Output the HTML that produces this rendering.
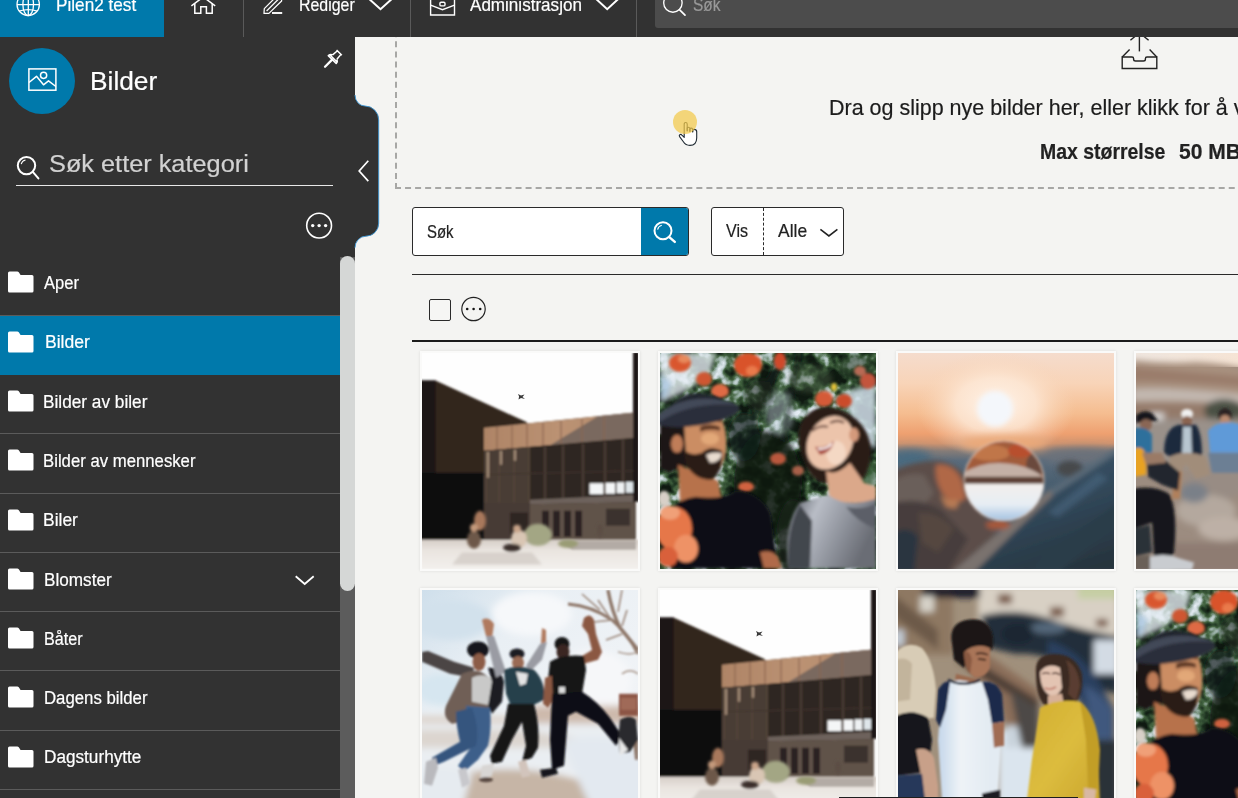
<!DOCTYPE html>
<html lang="no">
<head>
<meta charset="utf-8">
<title>Bilder</title>
<style>
*{box-sizing:border-box;margin:0;padding:0}
html,body{width:1238px;height:798px;overflow:hidden;background:#f4f4f2;font-family:"Liberation Sans",sans-serif;}
#app{position:relative;width:1238px;height:798px;overflow:hidden;background:#f4f4f2}
.abs{position:absolute}
.t{position:absolute;white-space:nowrap;transform-origin:0 0;line-height:1;display:block;-webkit-text-stroke:0.2px currentColor}
/* top bar */
#topbar{position:absolute;left:0;top:0;width:1238px;height:37px;background:#323232}
#sitetab{position:absolute;left:0;top:0;width:164px;height:37px;background:#0079ab}
.vsep{position:absolute;top:0;width:1px;height:37px;background:#5a5a5a}
#topsearch{position:absolute;left:655px;top:-6px;width:600px;height:33.5px;background:#4c4c4c;border-radius:3px}
/* sidebar */
#sidebar{position:absolute;left:0;top:37px;width:355px;height:761px;background:#323232}
.row{position:absolute;left:0;width:340px;border-bottom:1px solid #5b5b5b}
.row.sel{background:#0079ab;border-bottom-color:#0079ab}
.row svg{position:absolute;left:8px}
#sbtrack{position:absolute;left:340px;top:257px;width:15px;height:541px;background:#5c5c5c}
#sbthumb{position:absolute;left:340px;top:256px;width:15px;height:335px;background:#d5d7d6;border-radius:8px}
/* main */
#drop{position:absolute;left:395px;top:21px;width:900px;height:168px;border:2px dashed #a7a7a5}
#searchbox{position:absolute;left:412px;top:207px;width:277px;height:49px;background:#fff;border:1px solid #2a2a2a;border-radius:3px;overflow:hidden}
#searchbtn{position:absolute;left:228px;top:0;width:48px;height:47px;background:#0079ab}
#visbox{position:absolute;left:711px;top:207px;width:133px;height:49px;background:#fff;border:1px solid #2a2a2a;border-radius:3px}
#visdiv{position:absolute;left:51px;top:0;height:47px;width:0;border-left:1px dashed #2a2a2a}
.hr1{position:absolute;left:412px;top:274px;width:830px;height:1px;background:#2a2a2a}
.hr2{position:absolute;left:412px;top:340px;width:830px;height:2px;background:#1c1c1c}
#chk{position:absolute;left:429px;top:299px;width:22px;height:22px;border:1px solid #2a2a2a;border-radius:2px;background:#f6f6f4}
.card{position:absolute;width:220.5px;height:219.5px;background:#fafaf9;box-shadow:0 0 3px rgba(0,0,0,.10)}
.card svg{position:absolute;left:2.5px;top:2px;width:216px;height:215.6px;display:block}
</style>
</head>
<body>
<div id="app">

<!-- MAIN AREA -->
<div id="drop"></div>
<svg class="abs" style="left:1115px;top:30px" width="50" height="44" viewBox="0 0 50 44" fill="none" stroke="#222" stroke-width="1.4"><path d="M24.4 2 V21.4"/><path d="M15.4 10.2 L24.4 2.6 L33.6 10.2"/><path d="M7.2 27 L14.6 19.6 M41.8 27 L34.6 19.6"/><path d="M7.2 27 H17 Q18.6 27 18.6 28.4 V29.2 Q18.6 31 20.6 31 H28.4 Q30.4 31 30.4 29.2 V28.4 Q30.4 27 32 27 H41.8 V38.5 H7.2 Z" stroke-linejoin="miter"/></svg>

<svg class="abs" style="left:676px;top:119px" width="26" height="30" viewBox="0 0 26 30"><path d="M8.2 14.6 V5.2 Q8.2 3.5 9.7 3.5 Q11.2 3.5 11.2 5.2 V12 V9.2 Q11.2 8.2 12.4 8.2 Q13.6 8.2 13.9 9.4 V12.4 V10 Q14.2 9 15.3 9.1 Q16.5 9.2 16.7 10.4 V13 V11.2 Q17 10.3 18.2 10.4 Q20.6 10.6 20.7 12.6 V19 Q20.6 26.4 13.9 26.4 Q9.6 26.4 7.4 22.8 L3.6 17.6 Q2.8 16.4 3.8 15.7 Q4.9 15 5.9 16.1 L8.2 18.4 Z" fill="#fff" stroke="#1f2a33" stroke-width="1.1" stroke-linejoin="round"/><path d="M11.2 12 V8.6 M13.9 12.4 V9.6 M16.7 13 V10.6" stroke="#1f2a33" stroke-width="1" fill="none"/></svg>
<div class="abs" style="left:673px;top:110px;width:24px;height:24px;border-radius:50%;background:rgba(243,201,73,.72)"></div>

<div id="searchbox"><div id="searchbtn"></div></div>
<div id="visbox"><div id="visdiv"></div></div>
<div class="hr1"></div>
<div id="chk"></div>
<div class="hr2"></div>
<span class="t" style="left:828.60px;top:97.42px;font-size:21.6px;font-weight:400;color:#1c1c1c;transform:scaleX(0.9947)">Dra og slipp nye bilder her, eller klikk for å vi</span>
<span class="t" style="left:1039.80px;top:141.42px;font-size:21.6px;font-weight:700;color:#222;transform:scaleX(0.9006)">Max størrelse</span>
<span class="t" style="left:1179.20px;top:141.42px;font-size:21.6px;font-weight:700;color:#222;transform:scaleX(0.9747)">50 MB</span>
<span class="t" style="left:427.40px;top:224.03px;font-size:17.8px;font-weight:400;color:#222;transform:scaleX(0.8411)">Søk</span>
<span class="t" style="left:726.00px;top:223.13px;font-size:17.8px;font-weight:400;color:#222;transform:scaleX(0.9020)">Vis</span>
<span class="t" style="left:778.20px;top:223.13px;font-size:17.8px;font-weight:400;color:#222;transform:scaleX(0.9812)">Alle</span>
<svg class="abs" style="left:650px;top:217px" width="32" height="32" viewBox="0 0 32 32" fill="none" stroke="#fff"><circle cx="13" cy="13.8" r="8.5" stroke-width="2"/><path d="M7.6 12.6 A5.6 5.6 0 0 1 11.8 8.3" stroke-width="1.1"/><path d="M19.3 20.2 L24.8 24.9" stroke-width="2.4" stroke-linecap="round"/></svg>
<svg class="abs" style="left:816px;top:224px" width="26" height="18" viewBox="0 0 26 18" fill="none" stroke="#222" stroke-width="1.6"><path d="M4.4 5.4 L12.9 12 L21.4 5.4"/></svg>
<svg class="abs" style="left:459px;top:294px" width="30" height="30" viewBox="0 0 30 30"><circle cx="14.5" cy="15" r="11.7" fill="none" stroke="#222" stroke-width="1.2"/><circle cx="8.2" cy="15" r="1.3" fill="#111"/><circle cx="14.6" cy="15" r="1.3" fill="#111"/><circle cx="21.2" cy="15" r="1.3" fill="#111"/></svg>

<div class="card" style="left:419.5px;top:351px"><svg viewBox="0 0 216 216" preserveAspectRatio="none"><defs><filter id="b1a" x="-10%" y="-10%" width="120%" height="120%"><feGaussianBlur stdDeviation="0.9"/></filter><filter id="b1b" x="-20%" y="-20%" width="140%" height="140%"><feGaussianBlur stdDeviation="1.6"/></filter><linearGradient id="g1band" x1="0" x2="1"><stop offset="0" stop-color="#ae8466"/><stop offset="0.5" stop-color="#bb9273"/><stop offset="1" stop-color="#b48c6e"/></linearGradient><linearGradient id="g1gr" x1="0" y1="0" x2="0" y2="1"><stop offset="0" stop-color="#d6cec7"/><stop offset="0.35" stop-color="#e9e4df"/><stop offset="1" stop-color="#f3f0ed"/></linearGradient></defs>
<rect width="216" height="216" fill="#fefefe"/>
<g filter="url(#b1a)">
<!-- left dark building -->
<path d="M-2 27.5 H13.5 L105 69.5 V122 H-2 Z" fill="#33261f"/>
<path d="M-2 27.5 H13.5 V122 H-2 Z" fill="#1d1715"/>
<path d="M-2 120 H64 V188 H-2 Z" fill="#0e0c0c"/>
<!-- right building mass -->
<path d="M62 75 L213 59.5 V188 H62 Z" fill="#332a25"/>
<!-- tan band -->
<path d="M62 75 L213 59.5 V85 L62 98 Z" fill="url(#g1band)"/>
<path d="M128 92.3 L176 63.3 L213 59.5 V85 Z" fill="#7a695f"/><path d="M75 74 V97 M90 72.5 V95.5 M105 71 V94.5 M121 69.5 V93 M139 67.5 V91.5 M160 65.5 V89.5 M182 63 V88" stroke="#8a6450" stroke-width="1.1" fill="none"/>
<!-- glass facade columns -->
<path d="M62 98 L213 85 V146 H62 Z" fill="#2e2622"/><path d="M62 98 L108 94.5 V188 H62 Z" fill="#4a3e36"/>
<path d="M64 99 V186 M77 98 V186 M92 96.5 V186 M107 95 V150 M123 94 V150 M141 92.5 V146 M161 91 V146 M183 89 V146 M201 87 V146" stroke="#54453b" stroke-width="1.6" fill="none"/>
<path d="M62 122 L213 118" stroke="#40342e" stroke-width="1.2"/>
<path d="M66 99 V125 M79 98 V112 M93 97 V108" stroke="#a08974" stroke-width="2.4"/>
<!-- lower left facade (lit) -->
<path d="M62 150 H108 V188 H62 Z" fill="#473b34"/><path d="M88 160 H106 V186 H88 Z" fill="#2e2622"/>
<!-- white windows -->
<rect x="167.5" y="130.5" width="14" height="11" fill="#f4f6f7"/><rect x="183.5" y="130" width="9.5" height="11" fill="#f4f6f7"/><rect x="194.5" y="129.5" width="8" height="11" fill="#eef1f3"/><rect x="204" y="129" width="7" height="11" fill="#dfe6ea"/>
<!-- canopy -->
<path d="M108 147 L214 142 V149.5 L108 151.5 Z" fill="#6d625c"/>
<!-- lower right wall -->
<path d="M108 151.5 L214 149.5 V188 H108 Z" fill="#615349"/>
<path d="M120 158 H127 V184 H120 Z M131 158 H138 V184 H131 Z M142 158 H149 V184 H142 Z M153 158 H160 V184 H153 Z" fill="#2a2320"/>
<rect x="184" y="156" width="24" height="17" fill="#3a312d"/>
<!-- right edge bar -->
<rect x="211" y="-1" width="6" height="150" fill="#1a1513"/>
<!-- ground -->
<rect x="-1" y="187" width="218" height="30" fill="url(#g1gr)"/>
<path d="M138 188 H214 V197 H150 Z" fill="#b3aba5"/>
</g>
<g filter="url(#b1b)">
<!-- bush -->
<ellipse cx="116" cy="182" rx="14" ry="11" fill="#a3a684"/><ellipse cx="146" cy="191" rx="10" ry="4" fill="#9a9c74"/>
<!-- people -->
<ellipse cx="58" cy="168" rx="6" ry="10" fill="#a8785c"/><ellipse cx="52" cy="187" rx="7" ry="9" fill="#6d5848"/><ellipse cx="52" cy="175" rx="4" ry="4" fill="#c49a7c"/>
<ellipse cx="97" cy="186" rx="8" ry="9" fill="#d9c6b4"/><ellipse cx="95" cy="176" rx="4" ry="4" fill="#c9a489"/><ellipse cx="90" cy="195" rx="9" ry="4" fill="#3a2f2a"/>
<ellipse cx="178" cy="178" rx="3" ry="7" fill="#5c4d44"/>
<path d="M40 200 H110 L120 212 H30 Z" fill="#cfc8c2" opacity=".7"/>
</g>
<path d="M96 41 l3 1.5 l3.5 -1 l-2 2.5 l2.5 2 l-4 -0.8 l-2.5 1.5 l0.6 -3 z" fill="#3a3a3a"/>
</svg>
</div>
<div class="card" style="left:657.5px;top:351px"><svg viewBox="0 0 216 216" preserveAspectRatio="none"><defs><filter id="b2a" x="-20%" y="-20%" width="140%" height="140%"><feGaussianBlur stdDeviation="1.4"/></filter><filter id="b2b" x="-20%" y="-20%" width="140%" height="140%"><feGaussianBlur stdDeviation="2.6"/></filter><linearGradient id="g2sh" x1="0" x2="1" y1="0" y2="0.4"><stop offset="0" stop-color="#4b4f58"/><stop offset="0.35" stop-color="#b9bdc6"/><stop offset="0.7" stop-color="#8e929b"/><stop offset="1" stop-color="#6a6d75"/></linearGradient><filter id="f2t" x="0" y="0" width="100%" height="100%" color-interpolation-filters="sRGB"><feTurbulence type="fractalNoise" baseFrequency="0.06" numOctaves="3" seed="11"/><feColorMatrix type="matrix" values="2.2 0 0 0 -0.70  2.2 0 0 0 -0.70  2.2 0 0 0 -0.70  0 0 0 0 1"/><feComponentTransfer><feFuncR type="table" tableValues="0.06 0.13 0.27 0.66 0.90"/><feFuncG type="table" tableValues="0.10 0.22 0.40 0.74 0.93"/><feFuncB type="table" tableValues="0.07 0.14 0.26 0.72 0.96"/></feComponentTransfer></filter></defs>
<rect width="216" height="216" fill="#2c4230"/>
<rect width="216" height="216" filter="url(#f2t)"/>
<g filter="url(#b2b)">
<!-- light / dark shaping -->
<path d="M0 0 H56 L50 20 L26 38 L0 50 Z" fill="#e4ebf1" opacity=".8"/>
<path d="M0 20 L12 30 L6 46 H0 Z" fill="#a9c4de" opacity=".8"/>
<path d="M182 40 L216 30 V96 L198 88 Z" fill="#d3e0ec" opacity=".85"/>
<ellipse cx="120" cy="60" rx="14" ry="22" fill="#c9d6e2" opacity=".45"/>
<ellipse cx="108" cy="130" rx="34" ry="52" fill="#0f1912" opacity=".88"/><ellipse cx="84" cy="84" rx="16" ry="24" fill="#14201a" opacity=".7"/>
<ellipse cx="134" cy="186" rx="18" ry="40" fill="#15221a" opacity=".85"/>
<ellipse cx="100" cy="42" rx="16" ry="16" fill="#1c2c20" opacity=".55"/>
<ellipse cx="150" cy="26" rx="22" ry="14" fill="#41583c" opacity=".5"/>
<ellipse cx="196" cy="14" rx="18" ry="12" fill="#2a3c2a" opacity=".6"/>
<ellipse cx="206" cy="122" rx="10" ry="16" fill="#3a5c3a" opacity=".8"/>
<path d="M118 0 L128 0 L96 70 L90 66 Z" fill="#15201a" opacity=".6"/>
<path d="M136 0 L142 0 L126 90 L120 88 Z" fill="#15201a" opacity=".6"/>
</g>
<g filter="url(#b2a)">
<!-- flowers top -->
<ellipse cx="20" cy="10" rx="11" ry="9" fill="#d9572f"/><ellipse cx="24" cy="6" rx="6" ry="4" fill="#e88a5c"/>
<ellipse cx="44" cy="26" rx="8" ry="7" fill="#cf5632"/>
<ellipse cx="60" cy="38" rx="9" ry="7" fill="#df6a44"/>
<ellipse cx="88" cy="12" rx="14" ry="12" fill="#d9532c"/><ellipse cx="92" cy="18" rx="6" ry="5" fill="#ea7a4c"/>
<ellipse cx="120" cy="8" rx="6" ry="9" fill="#cf4a2a"/>
<ellipse cx="164" cy="46" rx="9" ry="8" fill="#d45a38"/>
<ellipse cx="184" cy="48" rx="8" ry="7" fill="#cb4c2c"/>
<ellipse cx="208" cy="28" rx="8" ry="8" fill="#c3553c"/>
<ellipse cx="200" cy="18" rx="6" ry="5" fill="#b86a55"/>
<ellipse cx="118" cy="106" rx="8" ry="6" fill="#b9583e"/>
<ellipse cx="86" cy="134" rx="8" ry="5" fill="#d0623f"/>
<ellipse cx="138" cy="118" rx="6" ry="5" fill="#a8604a"/>
<ellipse cx="174" cy="34" rx="3" ry="4" fill="#e8c53a"/>
</g>
<g filter="url(#b2a)">
<!-- woman hair -->
<path d="M140 96 Q134 70 152 58 Q172 48 196 66 Q214 82 210 108 Q206 128 196 132 L188 112 L170 132 Q150 128 146 112 Z" fill="#2b1a15"/>
<!-- woman neck -->
<path d="M166 118 Q176 124 190 110 L204 130 L216 134 V150 L170 150 Z" fill="#dba88a"/>
<!-- woman face -->
<ellipse cx="170" cy="90" rx="22" ry="28" transform="rotate(28 170 90)" fill="#ecc4ab"/>
<ellipse cx="194" cy="82" rx="5" ry="7" fill="#d49a7c"/><path d="M152 78 Q160 72 168 74 M170 70 Q178 66 184 70" stroke="#5a3a30" stroke-width="2" fill="none"/><ellipse cx="176" cy="100" rx="10" ry="12" fill="#f4d8c4"/>
<path d="M155 94 Q166 96 174 88 Q172 100 160 102 Z" fill="#a3362c"/>
<path d="M158 96 Q166 97 172 91" stroke="#fff" stroke-width="2" fill="none"/>
<!-- woman shirt -->
<path d="M128 216 Q124 170 140 150 L168 142 Q186 156 216 146 V216 Z" fill="url(#g2sh)"/>
<path d="M128 216 Q126 176 140 152 L152 168 L150 216 Z" fill="#43464e"/>
<path d="M186 154 Q204 158 216 150 V176 Q198 170 186 154" fill="#5c5f68"/>
<!-- man hair / head back -->
<path d="M0 66 Q10 60 28 62 L26 112 L10 120 L0 116 Z" fill="#1a1412"/>
<!-- man neck -->
<path d="M18 112 L58 128 L62 148 L20 150 Z" fill="#b7724c"/>
<!-- man face -->
<path d="M24 70 Q40 58 60 62 Q68 78 66 98 Q64 116 52 124 Q34 122 26 104 Z" fill="#cb8d64"/>
<ellipse cx="17" cy="91" rx="6" ry="9" fill="#c07d58"/><path d="M40 74 Q50 70 60 74 L60 78 Q50 75 40 79 Z" fill="#5a3624"/><ellipse cx="50" cy="86" rx="9" ry="6" fill="#e2a878"/><path d="M28 66 Q44 60 62 64 L62 70 Q44 66 28 74 Z" fill="#7a4c34"/>
<!-- beard -->
<path d="M23 96 Q30 104 42 100 Q50 92 62 98 Q64 118 52 127 Q36 128 26 112 Z" fill="#2a1a15"/>
<path d="M46 102 Q56 98 62 101 Q60 110 50 110 Z" fill="#e9dccf"/>
<!-- hat -->
<path d="M8 60 Q14 40 40 40 Q62 42 70 56 L72 62 L10 70 Z" fill="#22252e"/>
<ellipse cx="38" cy="62" rx="42" ry="10.5" transform="rotate(-9 38 62)" fill="#2a2e3a"/>
<path d="M-2 70 Q30 48 78 52 Q60 44 36 46 Q10 50 -2 62 Z" fill="#434859"/>
<!-- man shirt -->
<path d="M10 216 L12 156 Q20 146 36 144 Q60 148 76 138 Q100 140 110 160 L116 200 L108 216 Z" fill="#111113"/>
<path d="M100 200 Q110 196 118 204 L122 216 H104 Z" fill="#b06a48"/>
<!-- flowers bottom-left -->
<ellipse cx="14" cy="176" rx="18" ry="22" fill="#e6774a"/>
<ellipse cx="26" cy="196" rx="12" ry="14" fill="#ee9266"/>
<ellipse cx="8" cy="204" rx="10" ry="10" fill="#d9603a"/>
<ellipse cx="10" cy="160" rx="10" ry="7" fill="#f0a078"/>
<ellipse cx="4" cy="146" rx="6" ry="8" fill="#d8d0c8"/>
</g>
</svg>
</div>
<div class="card" style="left:895.5px;top:351px"><svg viewBox="0 0 216 216" preserveAspectRatio="none"><defs><filter id="b3a" x="-20%" y="-20%" width="140%" height="140%"><feGaussianBlur stdDeviation="1.6"/></filter><filter id="b3b" x="-30%" y="-30%" width="160%" height="160%"><feGaussianBlur stdDeviation="4"/></filter><filter id="b3c" x="-30%" y="-30%" width="160%" height="160%"><feGaussianBlur stdDeviation="2.4"/></filter>
<linearGradient id="g3sky" x1="0" y1="0" x2="0" y2="1"><stop offset="0" stop-color="#f5dccd"/><stop offset="0.14" stop-color="#f8d4b8"/><stop offset="0.28" stop-color="#f5bd90"/><stop offset="0.375" stop-color="#eea070"/><stop offset="0.42" stop-color="#cf9470"/><stop offset="0.455" stop-color="#857c78"/><stop offset="0.5" stop-color="#5a6b7b"/><stop offset="0.6" stop-color="#4a5f70"/><stop offset="1" stop-color="#3c5062"/></linearGradient>
<radialGradient id="g3glow" cx="0.5" cy="0.5" r="0.5"><stop offset="0" stop-color="#fff4ea" stop-opacity="1"/><stop offset="0.5" stop-color="#fde8d6" stop-opacity=".85"/><stop offset="1" stop-color="#f8d3b4" stop-opacity="0"/></radialGradient>
<linearGradient id="g3mt" x1="0" y1="0" x2="0" y2="1"><stop offset="0" stop-color="#8a7a74"/><stop offset="0.12" stop-color="#66707a"/><stop offset="0.4" stop-color="#4a5f70"/><stop offset="1" stop-color="#3c5062"/></linearGradient>
<linearGradient id="g3slab" x1="0.3" y1="0" x2="0.7" y2="1"><stop offset="0" stop-color="#3f586c"/><stop offset="0.45" stop-color="#31485a"/><stop offset="1" stop-color="#27343e"/></linearGradient>
<linearGradient id="g3lo" x1="0" y1="0" x2="0" y2="1"><stop offset="0" stop-color="#f3efec"/><stop offset="0.5" stop-color="#e6edf4"/><stop offset="1" stop-color="#8db3da"/></linearGradient>
<clipPath id="c3ball"><circle cx="106" cy="128" r="40"/></clipPath></defs>
<rect width="216" height="216" fill="url(#g3sky)"/>
<ellipse cx="98" cy="52" rx="80" ry="54" fill="url(#g3glow)"/>
<g filter="url(#b3b)">
<ellipse cx="106" cy="90" rx="44" ry="8" fill="#eaa878"/>
<ellipse cx="12" cy="106" rx="22" ry="9" fill="#4a6a80"/>
<ellipse cx="185" cy="104" rx="40" ry="8" fill="#6a717a"/>
</g>
<g filter="url(#b3c)">
<circle cx="97" cy="56" r="18" fill="#f4f7fb"/>
<!-- left rock mass -->
<path d="M-4 118 Q16 108 40 108 Q60 110 70 128 L96 178 L110 186 L70 220 H-4 Z" fill="#5c4e48"/>
<path d="M38 112 Q56 110 64 128 L68 146 Q54 154 44 140 Q36 126 38 112 Z" fill="#b06846"/>
<path d="M42 142 Q52 150 62 146 L58 156 L48 154 Z" fill="#b87c54"/>
<path d="M-4 128 Q10 118 26 122 L36 140 L20 160 L-4 156 Z" fill="#6a5f5a"/>
<path d="M-4 150 Q24 144 44 158 L70 186 L50 220 H-4 Z" fill="#463e3c"/>
<path d="M-4 180 Q10 172 20 184 L16 220 H-4 Z" fill="#2a3640"/>
<path d="M20 160 Q40 158 56 176 L40 200 L24 190 Z" fill="#54463f"/>
<!-- knob -->
<ellipse cx="172" cy="116" rx="13" ry="8" fill="#474a4c"/>
<!-- slab rim -->
<path d="M220 94 L150 138 L112 170 L54 220 H90 L130 186 L160 158 L220 114 Z" fill="#5a6a78"/><path d="M152 137 L112 170 L54 220 H92 L130 186 L160 156 Z" fill="#7a726e"/>
<!-- slab -->
<path d="M220 100 L156 142 L120 176 L76 220 H220 Z" fill="url(#g3slab)"/>
<path d="M220 150 L150 200 L130 220 H160 L220 172 Z" fill="#2b3d4a"/>
<path d="M200 120 L150 160 L160 164 L210 126 Z" fill="#46627a" opacity=".7"/>
<ellipse cx="100" cy="172" rx="12" ry="5" fill="#a8583a"/>
</g>
<g filter="url(#b3a)">
<g clip-path="url(#c3ball)">
<rect x="60" y="84" width="94" height="46" fill="#a15c3a"/>
<ellipse cx="92" cy="100" rx="20" ry="8" fill="#c07648"/>
<ellipse cx="122" cy="98" rx="12" ry="7" fill="#b8502e"/>
<ellipse cx="138" cy="112" rx="10" ry="12" fill="#6a4a3c"/>
<path d="M66 120 Q88 106 118 112 Q136 116 148 126 H66 Z" fill="#c4b0a6"/>
<path d="M64 124 H150 V132 H64 Z" fill="#5d4034"/>
<rect x="60" y="131" width="94" height="42" fill="url(#g3lo)"/>
<path d="M60 140 Q70 160 92 170 L60 172 Z" fill="#8db3da"/><path d="M152 140 Q142 160 120 170 L152 172 Z" fill="#8db3da"/>
</g>
<circle cx="106" cy="128" r="40" fill="none" stroke="#ecd6c6" stroke-width="1.2" opacity=".7"/>
</g>
</svg>
</div>
<div class="card" style="left:1133.5px;top:351px"><svg viewBox="0 0 216 216" preserveAspectRatio="none"><defs><filter id="b4a" x="-20%" y="-20%" width="140%" height="140%"><feGaussianBlur stdDeviation="1.5"/></filter><filter id="b4b" x="-30%" y="-30%" width="160%" height="160%"><feGaussianBlur stdDeviation="3"/></filter>
<linearGradient id="g4sky" x1="0" x2="1"><stop offset="0" stop-color="#efe6df"/><stop offset="0.5" stop-color="#f6e4d4"/></linearGradient></defs>
<rect width="216" height="216" fill="#9c8c80"/>
<rect width="216" height="14" fill="url(#g4sky)"/>
<g filter="url(#b4b)">
<path d="M-4 7 Q30 11 60 9 Q90 10 120 18 V70 H-4 Z" fill="#a8917f"/>
<path d="M-4 36 Q40 34 110 42 V52 Q50 46 -4 48 Z" fill="#c2b8b0"/>
<path d="M-4 50 H110 V70 H-4 Z" fill="#947a6a"/>
<path d="M-4 14 Q40 18 110 24 V34 Q40 28 -4 28 Z" fill="#9a7c6a"/>
<ellipse cx="88" cy="58" rx="20" ry="12" fill="#4b5145"/>
<rect x="-4" y="66" width="120" height="50" fill="#9a918a"/><rect x="14" y="60" width="14" height="7" fill="#d8d6d4"/>
<!-- rocks -->
<ellipse cx="80" cy="130" rx="30" ry="18" fill="#988c84"/>
<ellipse cx="70" cy="158" rx="30" ry="16" fill="#b4a89e"/>
<ellipse cx="88" cy="176" rx="26" ry="12" fill="#bdb0a6"/>
<ellipse cx="58" cy="140" rx="14" ry="10" fill="#7a8088"/>
<rect x="36" y="190" width="80" height="30" fill="#8e7c72"/>
</g>
<g filter="url(#b4a)">
<!-- person 3 right -->
<ellipse cx="89" cy="62" rx="7" ry="7" fill="#2a2422"/>
<ellipse cx="89" cy="67" rx="5" ry="5" fill="#b88a70"/>
<path d="M72 78 Q80 68 98 70 L112 74 V100 H74 Z" fill="#5f9ad8"/>
<path d="M72 100 H112 V120 H76 Z" fill="#6c7f94"/>
<!-- person 2 center -->
<ellipse cx="51" cy="61" rx="6" ry="5" fill="#f1f1f1"/>
<ellipse cx="51" cy="68" rx="5" ry="5" fill="#8a6450"/>
<path d="M28 100 Q28 76 42 72 H60 Q66 80 66 104 L56 106 L46 100 L34 104 Z" fill="#1e2a3e"/>
<path d="M47 74 H55 L56 102 H46 Z" fill="#b8c6d0"/>
<path d="M34 104 Q50 96 70 104 L74 122 L60 126 L50 112 L40 126 L32 118 Z" fill="#a18d7a"/>
<path d="M38 120 L46 118 L44 146 L36 146 Z" fill="#b0805c"/>
<!-- person 1 left -->
<path d="M0 62 Q8 56 16 60 L22 68 L0 70 Z" fill="#15171b"/>
<ellipse cx="10" cy="72" rx="6" ry="6" fill="#8a6654"/>
<path d="M-2 76 Q10 72 16 82 L16 104 L-2 110 Z" fill="#2e6f9c"/>
<path d="M-2 96 Q8 92 10 104 L10 122 L-2 124 Z" fill="#e8a222"/>
<path d="M10 104 L30 108 L44 120 L42 138 L26 132 L12 124 Z" fill="#23272d"/>
<path d="M6 100 L26 100 L30 110 L10 112 Z" fill="#9a7a66"/>
<!-- foreground black pants -->
<path d="M-2 136 Q20 132 34 142 Q42 160 38 200 L34 208 L18 206 L16 170 L-2 176 Z" fill="#13151a"/>
<path d="M-2 176 L14 172 L16 200 L-2 204 Z" fill="#2a3038"/>
<path d="M14 204 Q30 200 44 206 L58 210 L56 218 H14 Z" fill="#c9ccd0"/>
<path d="M-2 204 L14 202 L14 218 H-2 Z" fill="#6a6058"/>
</g>
</svg>
</div>
<div class="card" style="left:419.5px;top:588px"><svg viewBox="0 0 216 216" preserveAspectRatio="none"><defs><filter id="b5a" x="-20%" y="-20%" width="140%" height="140%"><feGaussianBlur stdDeviation="1.2"/></filter><filter id="b5b" x="-30%" y="-30%" width="160%" height="160%"><feGaussianBlur stdDeviation="3.5"/></filter>
<linearGradient id="g5sky" x1="0" y1="0" x2="1" y2="1"><stop offset="0" stop-color="#cfdfeb"/><stop offset="0.3" stop-color="#e9eff4"/><stop offset="1" stop-color="#f5f6f8"/></linearGradient></defs>
<rect width="216" height="216" fill="url(#g5sky)"/>
<g filter="url(#b5b)">
<ellipse cx="30" cy="30" rx="40" ry="20" fill="#d2e1ec"/>
<ellipse cx="110" cy="24" rx="40" ry="22" fill="#f6f8fa"/><ellipse cx="170" cy="90" rx="40" ry="30" fill="#f6f7f9"/>
<ellipse cx="20" cy="100" rx="26" ry="16" fill="#d6e6f0"/>
<!-- far bg -->
<rect x="-5" y="126" width="226" height="10" fill="#ddd3cb"/>
<rect x="110" y="116" width="110" height="18" fill="#cdb9ac"/>
<rect x="-5" y="134" width="226" height="50" fill="#eaeef2"/>
<path d="M-5 140 H100 L170 150 V158 H-5 Z" fill="#dcd5cf"/>
<path d="M40 184 Q110 170 186 200 L190 220 H30 Z" fill="#c6b5a6"/>
<path d="M140 150 Q190 140 222 160 V220 H170 Q150 180 140 150 Z" fill="#e3e9f0"/>
<path d="M-5 180 Q20 170 50 184 L40 220 H-5 Z" fill="#e6ebf0"/>
</g>
<g filter="url(#b5a)">
<!-- tree -->
<path d="M146 14 Q170 16 190 30 Q206 44 216 64" stroke="#8d7668" stroke-width="3" fill="none"/>
<path d="M186 0 Q190 22 198 38 Q208 50 216 60" stroke="#8d7668" stroke-width="3.4" fill="none"/>
<path d="M200 0 L196 22 M176 10 L188 28 M160 4 L178 20 M172 32 L190 30 M205 20 L200 36 M184 50 L200 44" stroke="#9c877a" stroke-width="1.6" fill="none"/>
<path d="M196 62 Q208 66 216 62 M200 84 Q208 78 216 84" stroke="#a79488" stroke-width="1.5" fill="none"/>
<rect x="197" y="104" width="19" height="22" fill="#8c5544"/>
<rect x="199" y="108" width="15" height="12" fill="#a06a58"/>
<path d="M211 150 L216 150 L216 170 L213 170 Z" fill="#8d7668"/>
<!-- person1 -->
<path d="M0 62 L6 61 L32 72 L52 78 L50 88 L28 84 L0 72 Z" fill="#4b4545"/>
<ellipse cx="56" cy="60" rx="11" ry="8.5" fill="#17171a"/>
<ellipse cx="57" cy="72" rx="6.5" ry="9" fill="#8c5c46"/>
<path d="M40 84 Q54 78 62 84 L70 90 L66 122 L48 130 L30 134 Q20 128 24 116 Z" fill="#6f5f57"/>
<path d="M50 88 Q60 82 72 90 L70 116 L50 112 Z" fill="#c9c9c8"/>
<path d="M66 78 Q78 76 82 92 L80 112 L70 124 L66 116 L70 92 Z" fill="#1b1c22"/>
<path d="M44 116 L68 118 Q70 140 66 156 L56 170 L42 182 L36 176 L50 156 Q44 140 44 116 Z" fill="#3d5f8a"/>
<path d="M34 122 L50 118 Q58 140 54 156 L22 172 L12 176 L10 168 L38 152 Q34 136 34 122 Z" fill="#34557e"/>
<path d="M4 172 L14 168 L16 178 L10 196 L2 194 Z" fill="#b9b9bd"/>
<path d="M36 180 L44 178 L48 194 L40 198 Z" fill="#c8c8cc"/>
<!-- person2 -->
<path d="M60 30 Q66 26 72 34 L70 48 L64 46 Z" fill="#b07a5e"/>
<path d="M64 46 L72 46 L84 82 L74 88 Z" fill="#9a9ba3"/>
<path d="M120 38 L124 40 L124 52 L119 54 Z" fill="#b07a5e"/>
<path d="M118 54 L125 52 L120 70 L108 82 L104 76 Z" fill="#9a9ba3"/>
<ellipse cx="95" cy="64" rx="7.5" ry="5.5" fill="#1b1b20"/>
<ellipse cx="96" cy="73" rx="6" ry="7" fill="#9a6b54"/>
<path d="M82 80 Q96 74 112 80 Q124 92 122 110 L110 116 L88 114 L84 104 Z" fill="#27414c"/>
<path d="M94 82 L106 84 L104 94 L98 96 Z" fill="#e4e4e4"/>
<path d="M86 114 L112 114 Q118 136 116 158 L110 168 L100 172 L104 156 L100 132 L90 150 L80 172 L70 174 L68 166 L82 136 Z" fill="#121318"/>
<path d="M60 176 L72 174 L70 186 L58 190 Z" fill="#d8d6d4"/>
<path d="M96 172 L104 170 L108 186 L100 188 Z" fill="#d2c4bc"/>
<!-- person3 -->
<ellipse cx="140" cy="54" rx="7.5" ry="7" fill="#141417"/>
<ellipse cx="141" cy="62" rx="6.5" ry="8" fill="#3a2822"/>
<path d="M162 28 Q168 22 172 30 L174 44 L180 62 L176 70 L162 74 L160 66 L170 60 L166 44 L160 36 Z" fill="#8b5842"/>
<path d="M128 72 Q140 64 162 66 L164 80 L160 104 L150 108 L130 106 L126 90 Z" fill="#141519"/>
<path d="M123 88 L130 86 L131 110 L126 118 L121 114 Z" fill="#8b5842"/>
<rect x="137" y="97" width="6" height="9" fill="#dcdcdc"/>
<path d="M130 104 L160 102 Q176 112 188 128 L200 146 L194 156 L176 134 L154 122 L146 126 L142 176 L130 180 L128 150 Z" fill="#101116"/>
<path d="M198 130 Q208 124 214 130 L216 150 L208 162 L198 164 L196 150 Z" fill="#2b2b2e"/>
<path d="M197 148 L206 160 L198 166 Z" fill="#e8e8e8"/>
<path d="M118 180 L134 178 L136 184 L120 188 Z" fill="#17181c"/>
<ellipse cx="64" cy="190" rx="7" ry="2.5" fill="#5a4a42"/>
</g>
</svg>
</div>
<div class="card" style="left:657.5px;top:588px"><svg viewBox="0 0 216 216" preserveAspectRatio="none"><defs><filter id="b1a" x="-10%" y="-10%" width="120%" height="120%"><feGaussianBlur stdDeviation="0.9"/></filter><filter id="b1b" x="-20%" y="-20%" width="140%" height="140%"><feGaussianBlur stdDeviation="1.6"/></filter><linearGradient id="g1band" x1="0" x2="1"><stop offset="0" stop-color="#ae8466"/><stop offset="0.5" stop-color="#bb9273"/><stop offset="1" stop-color="#b48c6e"/></linearGradient><linearGradient id="g1gr" x1="0" y1="0" x2="0" y2="1"><stop offset="0" stop-color="#d6cec7"/><stop offset="0.35" stop-color="#e9e4df"/><stop offset="1" stop-color="#f3f0ed"/></linearGradient></defs>
<rect width="216" height="216" fill="#fefefe"/>
<g filter="url(#b1a)">
<!-- left dark building -->
<path d="M-2 27.5 H13.5 L105 69.5 V122 H-2 Z" fill="#33261f"/>
<path d="M-2 27.5 H13.5 V122 H-2 Z" fill="#1d1715"/>
<path d="M-2 120 H64 V188 H-2 Z" fill="#0e0c0c"/>
<!-- right building mass -->
<path d="M62 75 L213 59.5 V188 H62 Z" fill="#332a25"/>
<!-- tan band -->
<path d="M62 75 L213 59.5 V85 L62 98 Z" fill="url(#g1band)"/>
<path d="M128 92.3 L176 63.3 L213 59.5 V85 Z" fill="#7a695f"/><path d="M75 74 V97 M90 72.5 V95.5 M105 71 V94.5 M121 69.5 V93 M139 67.5 V91.5 M160 65.5 V89.5 M182 63 V88" stroke="#8a6450" stroke-width="1.1" fill="none"/>
<!-- glass facade columns -->
<path d="M62 98 L213 85 V146 H62 Z" fill="#2e2622"/><path d="M62 98 L108 94.5 V188 H62 Z" fill="#4a3e36"/>
<path d="M64 99 V186 M77 98 V186 M92 96.5 V186 M107 95 V150 M123 94 V150 M141 92.5 V146 M161 91 V146 M183 89 V146 M201 87 V146" stroke="#54453b" stroke-width="1.6" fill="none"/>
<path d="M62 122 L213 118" stroke="#40342e" stroke-width="1.2"/>
<path d="M66 99 V125 M79 98 V112 M93 97 V108" stroke="#a08974" stroke-width="2.4"/>
<!-- lower left facade (lit) -->
<path d="M62 150 H108 V188 H62 Z" fill="#473b34"/><path d="M88 160 H106 V186 H88 Z" fill="#2e2622"/>
<!-- white windows -->
<rect x="167.5" y="130.5" width="14" height="11" fill="#f4f6f7"/><rect x="183.5" y="130" width="9.5" height="11" fill="#f4f6f7"/><rect x="194.5" y="129.5" width="8" height="11" fill="#eef1f3"/><rect x="204" y="129" width="7" height="11" fill="#dfe6ea"/>
<!-- canopy -->
<path d="M108 147 L214 142 V149.5 L108 151.5 Z" fill="#6d625c"/>
<!-- lower right wall -->
<path d="M108 151.5 L214 149.5 V188 H108 Z" fill="#615349"/>
<path d="M120 158 H127 V184 H120 Z M131 158 H138 V184 H131 Z M142 158 H149 V184 H142 Z M153 158 H160 V184 H153 Z" fill="#2a2320"/>
<rect x="184" y="156" width="24" height="17" fill="#3a312d"/>
<!-- right edge bar -->
<rect x="211" y="-1" width="6" height="150" fill="#1a1513"/>
<!-- ground -->
<rect x="-1" y="187" width="218" height="30" fill="url(#g1gr)"/>
<path d="M138 188 H214 V197 H150 Z" fill="#b3aba5"/>
</g>
<g filter="url(#b1b)">
<!-- bush -->
<ellipse cx="116" cy="182" rx="14" ry="11" fill="#a3a684"/><ellipse cx="146" cy="191" rx="10" ry="4" fill="#9a9c74"/>
<!-- people -->
<ellipse cx="58" cy="168" rx="6" ry="10" fill="#a8785c"/><ellipse cx="52" cy="187" rx="7" ry="9" fill="#6d5848"/><ellipse cx="52" cy="175" rx="4" ry="4" fill="#c49a7c"/>
<ellipse cx="97" cy="186" rx="8" ry="9" fill="#d9c6b4"/><ellipse cx="95" cy="176" rx="4" ry="4" fill="#c9a489"/><ellipse cx="90" cy="195" rx="9" ry="4" fill="#3a2f2a"/>
<ellipse cx="178" cy="178" rx="3" ry="7" fill="#5c4d44"/>
<path d="M40 200 H110 L120 212 H30 Z" fill="#cfc8c2" opacity=".7"/>
</g>
<path d="M96 41 l3 1.5 l3.5 -1 l-2 2.5 l2.5 2 l-4 -0.8 l-2.5 1.5 l0.6 -3 z" fill="#3a3a3a"/>
</svg>
</div>
<div class="card" style="left:895.5px;top:588px"><svg viewBox="0 0 216 216" preserveAspectRatio="none"><defs><filter id="b6a" x="-20%" y="-20%" width="140%" height="140%"><feGaussianBlur stdDeviation="1.3"/></filter><filter id="b6b" x="-30%" y="-30%" width="160%" height="160%"><feGaussianBlur stdDeviation="3.2"/></filter>
<linearGradient id="g6t" x1="0" x2="1"><stop offset="0" stop-color="#c4d6ea"/><stop offset="0.35" stop-color="#eef3f7"/><stop offset="0.8" stop-color="#e3ebf2"/></linearGradient>
<linearGradient id="g6y" x1="0" x2="1" y1="0" y2="1"><stop offset="0" stop-color="#d2ae30"/><stop offset="0.5" stop-color="#dcbc3e"/><stop offset="1" stop-color="#c9a42c"/></linearGradient></defs>
<rect width="216" height="216" fill="#a0907c"/>
<g filter="url(#b6b)">
<rect x="80" y="-5" width="140" height="50" fill="#d8d0c4"/>
<rect x="180" y="-5" width="40" height="14" fill="#c6cfa4"/>
<rect x="-5" y="-5" width="60" height="70" fill="#8e7862"/>
<path d="M-5 4 L40 40 L40 60 L-5 26 Z" fill="#6d5a4a"/>
<rect x="24" y="-4" width="58" height="12" fill="#1a1f2a"/>
<rect x="22" y="6" width="14" height="16" fill="#d6d2c8"/>
<rect x="-4" y="40" width="10" height="16" fill="#c3ccd6"/>
<rect x="100" y="4" width="14" height="10" fill="#7a5c4c"/><rect x="152" y="17" width="14" height="10" fill="#7a5c4c"/><rect x="198" y="29" width="12" height="8" fill="#7a5c4c"/>
<!-- foliage band -->
<path d="M82 26 Q120 16 160 32 Q200 44 220 46 V104 Q196 100 176 82 Q150 62 118 64 L92 58 Z" fill="#222f3b"/>
<path d="M150 50 Q180 60 200 90 L216 120 V150 L196 140 Q180 100 150 80 Z" fill="#2b3f5e"/>
<ellipse cx="150" cy="38" rx="18" ry="6" fill="#55687a"/><ellipse cx="120" cy="44" rx="16" ry="10" fill="#1a2530"/>
<rect x="196" y="50" width="24" height="34" fill="#d3dbe4"/>
<!-- stair wall -->
<path d="M92 66 L140 100 L140 160 L116 160 L100 110 L60 70 Z" fill="#8b6e5a"/>
<path d="M60 60 L140 110 V122 L60 72 Z" fill="#4c3c34"/>
<rect x="100" y="140" width="40" height="80" fill="#dbe5ee"/>
<rect x="108" y="136" width="14" height="22" fill="#c9d3dc"/><path d="M112 100 L140 118 V158 H124 Z" fill="#4d4a46"/>
<rect x="196" y="150" width="24" height="70" fill="#2b3038"/>
<path d="M186 96 Q200 100 214 120 V150 H196 Z" fill="#40587e"/>
</g>
<g filter="url(#b6a)">
<!-- blonde -->
<path d="M-2 62 Q10 50 24 58 Q36 72 38 100 L36 128 L20 130 L-2 128 Z" fill="#d8ccb6"/>
<path d="M-2 70 Q8 66 14 74 L12 110 L-2 112 Z" fill="#c2b49c"/>
<path d="M-2 126 Q14 118 30 128 L34 150 L30 182 L-2 186 Z" fill="#14161b"/>
<path d="M18 160 Q30 156 36 168 L40 196 L40 216 L28 216 L24 190 Z" fill="#c8a089"/>
<path d="M-2 186 L24 184 L28 218 H-2 Z" fill="#26385a"/>
<!-- man -->
<path d="M54 54 Q50 34 68 30 Q88 26 94 42 Q98 56 92 62 L74 60 L66 78 L56 70 Z" fill="#1b1715"/>
<path d="M66 62 Q78 52 92 58 L92 78 Q88 88 78 88 Q68 84 66 62 Z" fill="#a97559"/>
<path d="M58 84 L82 90 L78 100 L56 98 Z" fill="#9a6a50"/><path d="M78 64 Q84 62 90 65 M80 69 L88 70" stroke="#3a2418" stroke-width="1.6" fill="none"/><path d="M66 62 Q72 60 74 70 L72 84 Q66 78 66 62 Z" fill="#8a5a42"/>
<path d="M44 96 Q60 86 76 94 Q92 88 100 98 L104 140 L100 204 L94 210 L44 210 L40 150 Z" fill="url(#g6t)"/>
<path d="M50 90 Q66 98 82 90" stroke="#232a3e" stroke-width="2.4" fill="none"/>
<path d="M40 100 Q46 90 52 92 L48 120 L42 138 L38 130 Z" fill="#1f2b4c"/>
<path d="M84 92 Q98 90 104 104 L106 132 L94 134 L90 110 Z" fill="#1f2b4c"/>
<path d="M94 134 L106 132 L106 156 L96 158 Z" fill="#a06c52"/>
<path d="M84 204 L102 200 L102 218 H84 Z" fill="#1a1c24"/>
<!-- woman -->
<path d="M138 84 Q136 64 156 64 Q178 64 184 84 Q186 104 176 116 L160 112 L150 118 Q138 112 138 84 Z" fill="#3b2a24"/>
<path d="M142 82 Q150 72 162 78 L164 98 Q160 108 152 106 Q142 100 142 82 Z" fill="#e3c4b2"/>
<path d="M150 106 L164 104 L166 116 L150 118 Z" fill="#d6b09a"/><path d="M144 84 Q148 82 152 84 M154 84 Q158 82 162 85" stroke="#4a3028" stroke-width="1.4" fill="none"/><path d="M147 98 Q152 101 158 97" stroke="#b86a5a" stroke-width="1.4" fill="none"/><path d="M168 70 Q180 76 182 96 L178 112 L170 104 Q174 86 168 70 Z" fill="#5a3e30"/>
<path d="M142 118 Q160 108 182 112 Q196 124 200 160 L202 218 H128 L134 170 Z" fill="url(#g6y)"/>
<path d="M182 112 Q198 124 202 160 L200 200 L190 198 L188 150 Z" fill="#c29e28"/>
<path d="M186 198 L198 200 L196 218 H186 Z" fill="#d8b8a4"/>
</g>
</svg>
</div>
<div class="card" style="left:1133.5px;top:588px"><svg viewBox="0 0 216 216" preserveAspectRatio="none"><defs><filter id="b2a" x="-20%" y="-20%" width="140%" height="140%"><feGaussianBlur stdDeviation="1.4"/></filter><filter id="b2b" x="-20%" y="-20%" width="140%" height="140%"><feGaussianBlur stdDeviation="2.6"/></filter><linearGradient id="g2sh" x1="0" x2="1" y1="0" y2="0.4"><stop offset="0" stop-color="#4b4f58"/><stop offset="0.35" stop-color="#b9bdc6"/><stop offset="0.7" stop-color="#8e929b"/><stop offset="1" stop-color="#6a6d75"/></linearGradient><filter id="f2t" x="0" y="0" width="100%" height="100%" color-interpolation-filters="sRGB"><feTurbulence type="fractalNoise" baseFrequency="0.06" numOctaves="3" seed="11"/><feColorMatrix type="matrix" values="2.2 0 0 0 -0.70  2.2 0 0 0 -0.70  2.2 0 0 0 -0.70  0 0 0 0 1"/><feComponentTransfer><feFuncR type="table" tableValues="0.06 0.13 0.27 0.66 0.90"/><feFuncG type="table" tableValues="0.10 0.22 0.40 0.74 0.93"/><feFuncB type="table" tableValues="0.07 0.14 0.26 0.72 0.96"/></feComponentTransfer></filter></defs>
<rect width="216" height="216" fill="#2c4230"/>
<rect width="216" height="216" filter="url(#f2t)"/>
<g filter="url(#b2b)">
<!-- light / dark shaping -->
<path d="M0 0 H56 L50 20 L26 38 L0 50 Z" fill="#e4ebf1" opacity=".8"/>
<path d="M0 20 L12 30 L6 46 H0 Z" fill="#a9c4de" opacity=".8"/>
<path d="M182 40 L216 30 V96 L198 88 Z" fill="#d3e0ec" opacity=".85"/>
<ellipse cx="120" cy="60" rx="14" ry="22" fill="#c9d6e2" opacity=".45"/>
<ellipse cx="108" cy="130" rx="34" ry="52" fill="#0f1912" opacity=".88"/><ellipse cx="84" cy="84" rx="16" ry="24" fill="#14201a" opacity=".7"/>
<ellipse cx="134" cy="186" rx="18" ry="40" fill="#15221a" opacity=".85"/>
<ellipse cx="100" cy="42" rx="16" ry="16" fill="#1c2c20" opacity=".55"/>
<ellipse cx="150" cy="26" rx="22" ry="14" fill="#41583c" opacity=".5"/>
<ellipse cx="196" cy="14" rx="18" ry="12" fill="#2a3c2a" opacity=".6"/>
<ellipse cx="206" cy="122" rx="10" ry="16" fill="#3a5c3a" opacity=".8"/>
<path d="M118 0 L128 0 L96 70 L90 66 Z" fill="#15201a" opacity=".6"/>
<path d="M136 0 L142 0 L126 90 L120 88 Z" fill="#15201a" opacity=".6"/>
</g>
<g filter="url(#b2a)">
<!-- flowers top -->
<ellipse cx="20" cy="10" rx="11" ry="9" fill="#d9572f"/><ellipse cx="24" cy="6" rx="6" ry="4" fill="#e88a5c"/>
<ellipse cx="44" cy="26" rx="8" ry="7" fill="#cf5632"/>
<ellipse cx="60" cy="38" rx="9" ry="7" fill="#df6a44"/>
<ellipse cx="88" cy="12" rx="14" ry="12" fill="#d9532c"/><ellipse cx="92" cy="18" rx="6" ry="5" fill="#ea7a4c"/>
<ellipse cx="120" cy="8" rx="6" ry="9" fill="#cf4a2a"/>
<ellipse cx="164" cy="46" rx="9" ry="8" fill="#d45a38"/>
<ellipse cx="184" cy="48" rx="8" ry="7" fill="#cb4c2c"/>
<ellipse cx="208" cy="28" rx="8" ry="8" fill="#c3553c"/>
<ellipse cx="200" cy="18" rx="6" ry="5" fill="#b86a55"/>
<ellipse cx="118" cy="106" rx="8" ry="6" fill="#b9583e"/>
<ellipse cx="86" cy="134" rx="8" ry="5" fill="#d0623f"/>
<ellipse cx="138" cy="118" rx="6" ry="5" fill="#a8604a"/>
<ellipse cx="174" cy="34" rx="3" ry="4" fill="#e8c53a"/>
</g>
<g filter="url(#b2a)">
<!-- woman hair -->
<path d="M140 96 Q134 70 152 58 Q172 48 196 66 Q214 82 210 108 Q206 128 196 132 L188 112 L170 132 Q150 128 146 112 Z" fill="#2b1a15"/>
<!-- woman neck -->
<path d="M166 118 Q176 124 190 110 L204 130 L216 134 V150 L170 150 Z" fill="#dba88a"/>
<!-- woman face -->
<ellipse cx="170" cy="90" rx="22" ry="28" transform="rotate(28 170 90)" fill="#ecc4ab"/>
<ellipse cx="194" cy="82" rx="5" ry="7" fill="#d49a7c"/><path d="M152 78 Q160 72 168 74 M170 70 Q178 66 184 70" stroke="#5a3a30" stroke-width="2" fill="none"/><ellipse cx="176" cy="100" rx="10" ry="12" fill="#f4d8c4"/>
<path d="M155 94 Q166 96 174 88 Q172 100 160 102 Z" fill="#a3362c"/>
<path d="M158 96 Q166 97 172 91" stroke="#fff" stroke-width="2" fill="none"/>
<!-- woman shirt -->
<path d="M128 216 Q124 170 140 150 L168 142 Q186 156 216 146 V216 Z" fill="url(#g2sh)"/>
<path d="M128 216 Q126 176 140 152 L152 168 L150 216 Z" fill="#43464e"/>
<path d="M186 154 Q204 158 216 150 V176 Q198 170 186 154" fill="#5c5f68"/>
<!-- man hair / head back -->
<path d="M0 66 Q10 60 28 62 L26 112 L10 120 L0 116 Z" fill="#1a1412"/>
<!-- man neck -->
<path d="M18 112 L58 128 L62 148 L20 150 Z" fill="#b7724c"/>
<!-- man face -->
<path d="M24 70 Q40 58 60 62 Q68 78 66 98 Q64 116 52 124 Q34 122 26 104 Z" fill="#cb8d64"/>
<ellipse cx="17" cy="91" rx="6" ry="9" fill="#c07d58"/><path d="M40 74 Q50 70 60 74 L60 78 Q50 75 40 79 Z" fill="#5a3624"/><ellipse cx="50" cy="86" rx="9" ry="6" fill="#e2a878"/><path d="M28 66 Q44 60 62 64 L62 70 Q44 66 28 74 Z" fill="#7a4c34"/>
<!-- beard -->
<path d="M23 96 Q30 104 42 100 Q50 92 62 98 Q64 118 52 127 Q36 128 26 112 Z" fill="#2a1a15"/>
<path d="M46 102 Q56 98 62 101 Q60 110 50 110 Z" fill="#e9dccf"/>
<!-- hat -->
<path d="M8 60 Q14 40 40 40 Q62 42 70 56 L72 62 L10 70 Z" fill="#22252e"/>
<ellipse cx="38" cy="62" rx="42" ry="10.5" transform="rotate(-9 38 62)" fill="#2a2e3a"/>
<path d="M-2 70 Q30 48 78 52 Q60 44 36 46 Q10 50 -2 62 Z" fill="#434859"/>
<!-- man shirt -->
<path d="M10 216 L12 156 Q20 146 36 144 Q60 148 76 138 Q100 140 110 160 L116 200 L108 216 Z" fill="#111113"/>
<path d="M100 200 Q110 196 118 204 L122 216 H104 Z" fill="#b06a48"/>
<!-- flowers bottom-left -->
<ellipse cx="14" cy="176" rx="18" ry="22" fill="#e6774a"/>
<ellipse cx="26" cy="196" rx="12" ry="14" fill="#ee9266"/>
<ellipse cx="8" cy="204" rx="10" ry="10" fill="#d9603a"/>
<ellipse cx="10" cy="160" rx="10" ry="7" fill="#f0a078"/>
<ellipse cx="4" cy="146" rx="6" ry="8" fill="#d8d0c8"/>
</g>
</svg>
</div>
<div class="abs" style="left:839px;top:797px;width:239px;height:2px;background:#1e1e1e"></div>


<!-- SIDEBAR -->
<div id="sidebar"></div>
<svg class="abs" style="left:340px;top:80px" width="50" height="180" viewBox="0 0 50 180"><path d="M0 0 H15 V15 A10 11 0 0 0 25 26 A13.7 14 0 0 1 38.7 40 V143.2 A12.7 13 0 0 1 26 156.2 A11 11.5 0 0 0 15 167.7 V180 H0 Z" fill="#323232"/><path d="M15 15 A10 11 0 0 0 25 26 A13.7 14 0 0 1 38.7 40 V143.2 A12.7 13 0 0 1 26 156.2 A11 11.5 0 0 0 15 167.7" fill="none" stroke="#3c97d6" stroke-width="0.9"/></svg>
<div class="row" style="top:256px;height:60px"><svg width="26" height="22" viewBox="0 0 26 22" style="top:15px"><path d="M1.5 0.5 H9.2 Q10.2 0.5 10.8 1.3 L12.6 4 H24 Q25.5 4 25.5 5.5 V20 Q25.5 21.5 24 21.5 H1.5 Q0 21.5 0 20 V2 Q0 0.5 1.5 0.5 Z" fill="#fff"/></svg></div>
<div class="row sel" style="top:316px;height:59px"><svg width="26" height="22" viewBox="0 0 26 22" style="top:15px"><path d="M1.5 0.5 H9.2 Q10.2 0.5 10.8 1.3 L12.6 4 H24 Q25.5 4 25.5 5.5 V20 Q25.5 21.5 24 21.5 H1.5 Q0 21.5 0 20 V2 Q0 0.5 1.5 0.5 Z" fill="#fff"/></svg></div>
<div class="row" style="top:375px;height:59px"><svg width="26" height="22" viewBox="0 0 26 22" style="top:15px"><path d="M1.5 0.5 H9.2 Q10.2 0.5 10.8 1.3 L12.6 4 H24 Q25.5 4 25.5 5.5 V20 Q25.5 21.5 24 21.5 H1.5 Q0 21.5 0 20 V2 Q0 0.5 1.5 0.5 Z" fill="#fff"/></svg></div>
<div class="row" style="top:434px;height:60px"><svg width="26" height="22" viewBox="0 0 26 22" style="top:15px"><path d="M1.5 0.5 H9.2 Q10.2 0.5 10.8 1.3 L12.6 4 H24 Q25.5 4 25.5 5.5 V20 Q25.5 21.5 24 21.5 H1.5 Q0 21.5 0 20 V2 Q0 0.5 1.5 0.5 Z" fill="#fff"/></svg></div>
<div class="row" style="top:494px;height:59px"><svg width="26" height="22" viewBox="0 0 26 22" style="top:15px"><path d="M1.5 0.5 H9.2 Q10.2 0.5 10.8 1.3 L12.6 4 H24 Q25.5 4 25.5 5.5 V20 Q25.5 21.5 24 21.5 H1.5 Q0 21.5 0 20 V2 Q0 0.5 1.5 0.5 Z" fill="#fff"/></svg></div>
<div class="row" style="top:553px;height:59px"><svg width="26" height="22" viewBox="0 0 26 22" style="top:15px"><path d="M1.5 0.5 H9.2 Q10.2 0.5 10.8 1.3 L12.6 4 H24 Q25.5 4 25.5 5.5 V20 Q25.5 21.5 24 21.5 H1.5 Q0 21.5 0 20 V2 Q0 0.5 1.5 0.5 Z" fill="#fff"/></svg></div>
<div class="row" style="top:612px;height:59px"><svg width="26" height="22" viewBox="0 0 26 22" style="top:15px"><path d="M1.5 0.5 H9.2 Q10.2 0.5 10.8 1.3 L12.6 4 H24 Q25.5 4 25.5 5.5 V20 Q25.5 21.5 24 21.5 H1.5 Q0 21.5 0 20 V2 Q0 0.5 1.5 0.5 Z" fill="#fff"/></svg></div>
<div class="row" style="top:671px;height:60px"><svg width="26" height="22" viewBox="0 0 26 22" style="top:15px"><path d="M1.5 0.5 H9.2 Q10.2 0.5 10.8 1.3 L12.6 4 H24 Q25.5 4 25.5 5.5 V20 Q25.5 21.5 24 21.5 H1.5 Q0 21.5 0 20 V2 Q0 0.5 1.5 0.5 Z" fill="#fff"/></svg></div>
<div class="row" style="top:731px;height:59px"><svg width="26" height="22" viewBox="0 0 26 22" style="top:15px"><path d="M1.5 0.5 H9.2 Q10.2 0.5 10.8 1.3 L12.6 4 H24 Q25.5 4 25.5 5.5 V20 Q25.5 21.5 24 21.5 H1.5 Q0 21.5 0 20 V2 Q0 0.5 1.5 0.5 Z" fill="#fff"/></svg></div>
<div class="row" style="top:790px;height:59px"><svg width="26" height="22" viewBox="0 0 26 22" style="top:15px"><path d="M1.5 0.5 H9.2 Q10.2 0.5 10.8 1.3 L12.6 4 H24 Q25.5 4 25.5 5.5 V20 Q25.5 21.5 24 21.5 H1.5 Q0 21.5 0 20 V2 Q0 0.5 1.5 0.5 Z" fill="#fff"/></svg></div>
<div class="abs" style="left:9px;top:48px;width:66px;height:66px;border-radius:50%;background:#0079ab"></div>
<svg class="abs" style="left:27px;top:67px" width="31" height="25" viewBox="0 0 31 25"><rect x="1.9" y="1.9" width="27" height="21.3" fill="none" stroke="#fff" stroke-width="1.5"/><circle cx="16.6" cy="8.3" r="3.1" fill="none" stroke="#fff" stroke-width="1.5"/><path d="M2 15.5 L9.5 9.3 L16.5 17.8 L21.5 13.8 L28.9 19.5" fill="none" stroke="#fff" stroke-width="1.5" stroke-linejoin="round"/></svg>
<svg class="abs" style="left:14px;top:153px" width="28" height="28" viewBox="0 0 28 28"><circle cx="12.5" cy="12.6" r="8.7" fill="none" stroke="#fff" stroke-width="2"/><path d="M7.2 11.2 A5.6 5.6 0 0 1 11.5 7" fill="none" stroke="#fff" stroke-width="1.1"/><path d="M18.8 18.9 L24.4 25.4" stroke="#fff" stroke-width="2" stroke-linecap="round"/></svg>
<div class="abs" style="left:16px;top:185px;width:317px;height:1px;background:#e8e8e8"></div>
<svg class="abs" style="left:304px;top:211px" width="30" height="30" viewBox="0 0 30 30"><circle cx="15.1" cy="14.6" r="12.4" fill="none" stroke="#fff" stroke-width="1.6"/><circle cx="8.7" cy="14.6" r="1.7" fill="#fff"/><circle cx="15.1" cy="14.6" r="1.7" fill="#fff"/><circle cx="21.6" cy="14.6" r="1.7" fill="#fff"/></svg>
<svg class="abs" style="left:354px;top:156px" width="20" height="30" viewBox="0 0 20 30"><path d="M14.3 4.7 L5.2 15 L14.3 25.1" fill="none" stroke="#fff" stroke-width="1.7"/></svg>
<svg class="abs" style="left:290px;top:568px" width="30" height="24" viewBox="0 0 30 24"><path d="M5.7 8.2 L14.7 16 L23.7 8.2" fill="none" stroke="#fff" stroke-width="1.8"/></svg>
<svg class="abs" style="left:320px;top:46px" width="26" height="26" viewBox="0 0 26 26"><g transform="translate(12.6,13.2) rotate(45) scale(0.85)" fill="none" stroke="#fff" stroke-width="1.8" stroke-linejoin="round"><path d="M-4.4 -11 H4.4 M-3 -10.6 L-3.6 -3.6 M3 -10.6 L3.6 -3.6 M-3.6 -3.6 Q-6.3 -2.6 -6.6 0.6 H6.6 Q6.3 -2.6 3.6 -3.6 M-6.4 -1.4 H6.4"/><path d="M0 0.8 V12.6" stroke-width="2.7" stroke-linecap="round"/></g></svg>

<span class="t" style="left:90.00px;top:69.30px;font-size:25.4px;font-weight:400;color:#fff;transform:scaleX(1.0358)">Bilder</span>
<span class="t" style="left:48.80px;top:151.98px;font-size:24.6px;font-weight:400;color:#d2d2d2;transform:scaleX(1.0292)">Søk etter kategori</span>
<span class="t" style="left:44.30px;top:274.80px;font-size:17.6px;font-weight:400;color:#fff;transform:scaleX(0.9416)">Aper</span>
<span class="t" style="left:44.60px;top:333.70px;font-size:17.6px;font-weight:400;color:#fff;transform:scaleX(0.9977)">Bilder</span>
<span class="t" style="left:43.30px;top:393.60px;font-size:17.6px;font-weight:400;color:#fff;transform:scaleX(0.9794)">Bilder av biler</span>
<span class="t" style="left:43.30px;top:452.90px;font-size:17.6px;font-weight:400;color:#fff;transform:scaleX(0.9509)">Bilder av mennesker</span>
<span class="t" style="left:43.30px;top:512.20px;font-size:17.6px;font-weight:400;color:#fff;transform:scaleX(0.9914)">Biler</span>
<span class="t" style="left:43.60px;top:571.50px;font-size:17.6px;font-weight:400;color:#fff;transform:scaleX(0.9756)">Blomster</span>
<span class="t" style="left:43.60px;top:630.80px;font-size:17.6px;font-weight:400;color:#fff;transform:scaleX(0.9201)">Båter</span>
<span class="t" style="left:43.60px;top:690.10px;font-size:17.6px;font-weight:400;color:#fff;transform:scaleX(0.9534)">Dagens bilder</span>
<span class="t" style="left:43.60px;top:749.40px;font-size:17.6px;font-weight:400;color:#fff;transform:scaleX(0.9760)">Dagsturhytte</span>
<div id="sbtrack"></div>
<div id="sbthumb"></div>

<!-- TOP BAR -->
<div id="topbar">
  <div id="sitetab"></div>
  <div class="vsep" style="left:243px"></div>
  <div class="vsep" style="left:410px"></div>
  <div class="vsep" style="left:636px"></div>
  <div id="topsearch"></div>
  <svg class="abs" style="left:14px;top:-10px" width="30" height="30" viewBox="0 0 30 30" fill="none" stroke="#fff" stroke-width="1.3"><circle cx="14.2" cy="14.4" r="11.2"/><path d="M3 14.6 H25.4 M14.3 3.2 V25.6"/><ellipse cx="14.2" cy="14.4" rx="5.3" ry="11.2"/><path d="M5.2 7.8 Q14.2 10.6 23.2 7.8 M5.2 21.2 Q14.2 18.2 23.2 21.2"/></svg>
<svg class="abs" style="left:188px;top:-6px" width="30" height="22" viewBox="0 0 30 22" fill="none" stroke="#fff" stroke-width="1.5"><path d="M3.4 11.8 L15.3 3 L27.2 11.8"/><path d="M6.8 9.6 V19.3 H12.8 V12.8 H18.4 V19.3 H24.2 V9.6"/></svg>
<svg class="abs" style="left:260px;top:-6px" width="26" height="24" viewBox="0 0 26 24" fill="none" stroke="#fff" stroke-width="1.25" stroke-linejoin="round"><path d="M4 19.4 L4.3 14.6 L15.5 3.4 L21.6 3.4 L21.6 7 L8.9 19.4 Z"/><path d="M6.6 17 L18.8 4.8"/><path d="M12 19 H22.2" stroke-width="1.9"/></svg>
<svg class="abs" style="left:366px;top:-8px" width="30" height="22" viewBox="0 0 30 22" fill="none" stroke="#fff" stroke-width="2"><path d="M1 5 L14.5 17.2 L28 5"/></svg>
<svg class="abs" style="left:428px;top:-6px" width="30" height="24" viewBox="0 0 30 24" fill="none" stroke="#fff" stroke-width="1.4"><path d="M2.6 0 V21 H26.5 V0"/><path d="M2.6 11.2 L14.5 15.7 L26.5 11.2"/><rect x="11.9" y="8.3" width="5.1" height="3.6" rx="1.2"/></svg>
<svg class="abs" style="left:593px;top:-8px" width="30" height="22" viewBox="0 0 30 22" fill="none" stroke="#fff" stroke-width="2"><path d="M1 5 L14.2 17.2 L27.4 5"/></svg>
<svg class="abs" style="left:658px;top:-8px" width="30" height="28" viewBox="0 0 30 28" fill="none" stroke="#fff" stroke-width="1.35"><circle cx="14.9" cy="11" r="9.2"/><path d="M21.4 17.6 L27 23.2" stroke-width="1.7" stroke-linecap="round"/></svg>

<span class="t" style="left:55.60px;top:-3.86px;font-size:18.5px;font-weight:400;color:#fff;transform:scaleX(0.9283)">Pilen2 test</span>
<span class="t" style="left:298.80px;top:-4.06px;font-size:18.5px;font-weight:400;color:#fff;transform:scaleX(0.8596)">Rediger</span>
<span class="t" style="left:469.90px;top:-4.06px;font-size:18.5px;font-weight:400;color:#fff;transform:scaleX(0.9223)">Administrasjon</span>
<span class="t" style="left:693.00px;top:-4.06px;font-size:18.5px;font-weight:400;color:#9a9a9a;transform:scaleX(0.8361)">Søk</span>
</div>

</div>
</body>
</html>
